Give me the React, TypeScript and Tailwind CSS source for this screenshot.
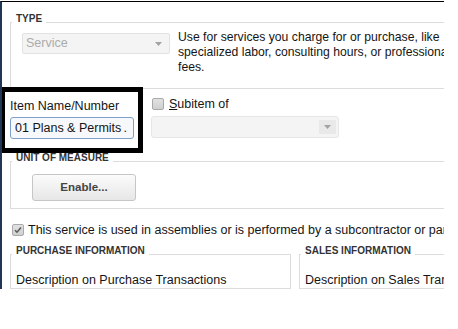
import React from "react";

const FONT = "font-['Liberation_Sans',Arial,sans-serif]";

function Legend({ children }: { children: React.ReactNode }) {
  return (
    <legend className="ml-[1px] px-[4px] pb-[7px] text-[10px] font-bold leading-[12px] text-[#333] uppercase">
      {children}
    </legend>
  );
}

function Checkbox({ checked = false }: { checked?: boolean }) {
  return (
    <span className="flex h-[12px] w-[12px] shrink-0 items-center justify-center rounded-[2px] border border-[#a9a9a9] bg-gradient-to-b from-[#e2e2e2] to-[#cfcfcf]">
      {checked && (
        <svg width="8" height="8" viewBox="0 0 8 8" aria-hidden="true">
          <path d="M1 4.2 L3 6.2 L7 1.6" fill="none" stroke="#5b5b5b" strokeWidth="1.6" />
        </svg>
      )}
    </span>
  );
}

function Arrow() {
  return (
    <svg width="7" height="4" viewBox="0 0 7 4" aria-hidden="true">
      <path d="M0 0 H7 L3.5 4 Z" fill="#a3a3a3" />
    </svg>
  );
}

export default function App() {
  return (
    <div className={`h-[329px] w-[458px] bg-white pt-px ${FONT}`}>
      <div className="h-[288px] w-[444px] overflow-hidden border-t border-l-2 border-t-black border-l-[#1f3654] bg-white text-[#151515]">
        {/* Type */}
        <fieldset className="ml-[8px] mt-[11px] border border-r-0 border-[#dcdcdc]">
          <Legend>Type</Legend>
          <div className="-mt-[2px] flex items-start pb-[13px] pl-[11px]">
            <div className="mt-[3px] flex h-[21px] w-[148px] shrink-0 items-center justify-between rounded-[2px] border border-[#e2e2e2] bg-[#f4f4f4] pl-[3px] pr-[7px] text-[12.5px] text-[#ababab]">
              <span>Service</span>
              <Arrow />
            </div>
            <p className="ml-[8px] whitespace-nowrap text-[12.2px] leading-[15px]">
              Use for services you charge for or purchase, like
              <br />
              specialized labor, consulting hours, or professional
              <br />
              fees.
            </p>
          </div>
        </fieldset>

        {/* Item name + subitem */}
        <div className="-ml-[2px] -mt-[2px] flex items-start">
          <div className="w-[143px] shrink-0 border-[5px] border-black bg-white pb-[9px] pl-[5px] pt-[6px]">
            <div className="text-[12.5px] leading-[16px]">Item Name/Number</div>
            <div className="mt-[3px] flex h-[22px] w-[124px] items-center justify-between rounded-[3px] border border-[#7fa0cd] bg-[#f6f8fb] pl-[4px] pr-[6px] text-[12.5px] leading-[16px]">
              <span className="whitespace-nowrap">01 Plans &amp; Permits</span>
              <span>.</span>
            </div>
          </div>
          <div className="ml-[8px] pt-[9px]">
            <div className="flex h-[16px] items-center gap-[5px] pl-[1px] text-[12.5px] leading-[16px]">
              <Checkbox />
              <span>
                <span className="underline">S</span>ubitem of
              </span>
            </div>
            <div className="mt-[4px] flex h-[22px] w-[188px] items-center justify-end rounded-[3px] border border-[#e6e6e6] bg-[#f4f4f4] pr-[2px]">
              <span className="flex h-[14px] w-[17px] items-center justify-center bg-[#e9e9e9]">
                <Arrow />
              </span>
            </div>
          </div>
        </div>

        {/* Unit of measure */}
        <fieldset className="-mt-[1px] ml-[8px] border border-r-0 border-[#dcdcdc]">
          <Legend>Unit of Measure</Legend>
          <div className="pb-[7px] pl-[21px] pt-[3px]">
            <button className="flex h-[27px] w-[104px] items-center justify-center rounded-[3px] border border-[#c6c6c6] bg-gradient-to-b from-[#fbfbfb] to-[#e7e7e7] text-[11.5px] font-bold text-[#444]">
              Enable...
            </button>
          </div>
        </fieldset>

        {/* Assemblies */}
        <div className="ml-[10px] mt-[13px] flex h-[16px] items-center gap-[4px] whitespace-nowrap text-[12.5px] leading-[16px]">
          <Checkbox checked />
          <span>This service is used in assemblies or is performed by a subcontractor or partner</span>
        </div>

        {/* Purchase / Sales */}
        <div className="ml-[8px] mt-[7px] flex gap-[8px]">
          <fieldset className="w-[281px] shrink-0 border border-[#dcdcdc]">
            <Legend>Purchase Information</Legend>
            <div className="whitespace-nowrap pl-[5px] pt-[8px] text-[12.5px] leading-[16px]">
              Description on Purchase Transactions
            </div>
          </fieldset>
          <fieldset className="min-w-0 flex-1 border border-r-0 border-[#dcdcdc]">
            <Legend>Sales Information</Legend>
            <div className="whitespace-nowrap pl-[5px] pt-[8px] text-[12.5px] leading-[16px]">
              Description on Sales Transactions
            </div>
          </fieldset>
        </div>
      </div>
    </div>
  );
}
